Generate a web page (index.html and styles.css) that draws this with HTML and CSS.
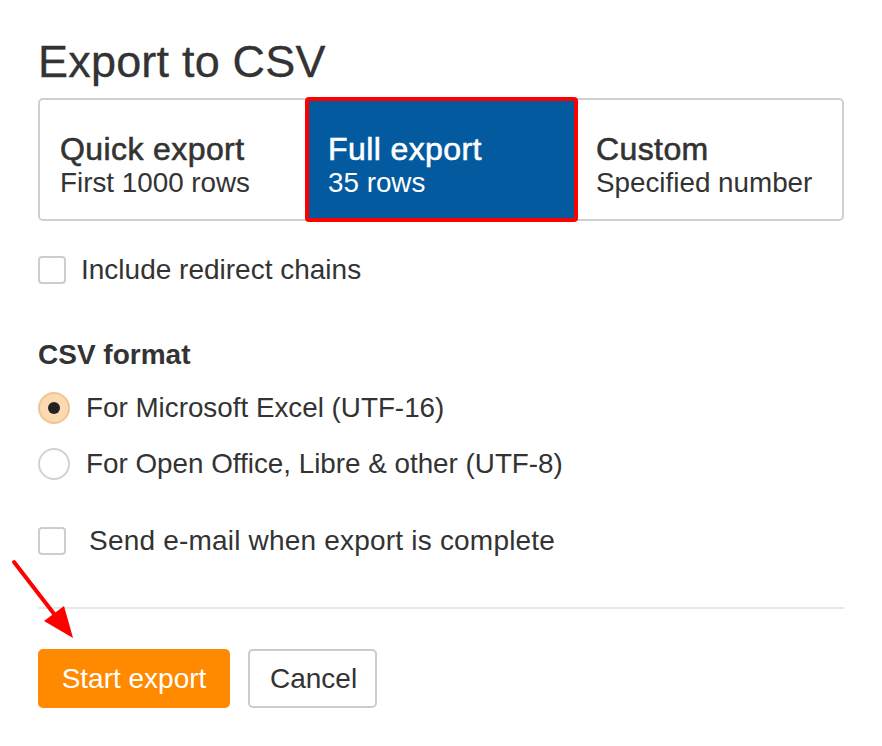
FILE: index.html
```html
<!DOCTYPE html>
<html lang="en">
<head>
<meta charset="utf-8">
<title>Export to CSV</title>
<link rel="stylesheet" href="styles.css">
</head>
<body>
<div class="dialog">
  <h1 class="title">Export to CSV</h1>

  <div class="segments">
    <div class="segment">
      <div class="seg-head">Quick export</div>
      <div class="seg-sub">First 1000 rows</div>
    </div>
    <div class="segment selected">
      <div class="seg-head">Full export</div>
      <div class="seg-sub">35 rows</div>
    </div>
    <div class="segment">
      <div class="seg-head">Custom</div>
      <div class="seg-sub">Specified number</div>
    </div>
  </div>

  <label class="check-row redirect">
    <span class="checkbox"></span>
    <span class="label-text">Include redirect chains</span>
  </label>

  <h2 class="section-title">CSV format</h2>

  <label class="radio-row first">
    <span class="radio checked"><span class="dot"></span></span>
    <span class="label-text">For Microsoft Excel (UTF-16)</span>
  </label>
  <label class="radio-row second">
    <span class="radio"></span>
    <span class="label-text">For Open Office, Libre &amp; other (UTF-8)</span>
  </label>

  <label class="check-row email">
    <span class="checkbox"></span>
    <span class="label-text wide">Send e-mail when export is complete</span>
  </label>

  <hr class="divider">

  <div class="actions">
    <button class="btn primary">Start export</button>
    <button class="btn secondary">Cancel</button>
  </div>

  <svg class="arrow" width="90" height="100" viewBox="0 0 90 100">
    <line x1="14" y1="12" x2="58" y2="69" stroke="#f00" stroke-width="4" stroke-linecap="round"/>
    <polygon points="73,88 44,71 64,56" fill="#f00"/>
  </svg>
</div>
</body>
</html>
```

FILE: styles.css
```css
html, body {
  margin: 0;
  padding: 0;
  background: #fff;
}

body {
  font-family: "Liberation Sans", Arial, Helvetica, sans-serif;
  color: #333;
}

.dialog {
  position: relative;
  width: 806px;
  padding: 37px 38px 0 38px;
}

.title {
  margin: 0;
  font-size: 45px;
  line-height: 50px;
  font-weight: normal;
  color: #333;
  letter-spacing: 0.2px;
  -webkit-text-stroke: 0.3px #333;
}

.segments {
  margin-top: 11px;
  display: grid;
  grid-template-columns: 265px 273px 1fr;
  border: 2px solid #cfcfcf;
  border-radius: 5px;
  height: 119px;
}

.segment {
  padding: 31px 16px 0 20px;
  background: #fff;
  border-radius: 4px;
}

.segment:last-child {
  padding-left: 18px;
}

.segment.selected {
  background: #035a9e;
  color: #fff;
  border: 4px solid #ff0000;
  margin: -3px 0 -3px 0;
  padding: 30px 10px 0 19px;
}

.seg-head {
  font-size: 32px;
  line-height: 36px;
  letter-spacing: 0.4px;
  -webkit-text-stroke: 0.6px currentColor;
  white-space: nowrap;
}

.seg-sub {
  font-size: 27.8px;
  line-height: 32px;
  white-space: nowrap;
}

.check-row,
.radio-row {
  display: flex;
  align-items: center;
  height: 32px;
  font-size: 28px;
}

.redirect {
  margin-top: 33px;
}

.checkbox {
  width: 24px;
  height: 24px;
  border: 2px solid #cdcdcd;
  border-radius: 4px;
  background: #fff;
  flex: none;
}

.check-row .label-text {
  margin-left: 15px;
}

.check-row .label-text.wide {
  margin-left: 23px;
  letter-spacing: 0.2px;
}

.section-title {
  margin: 53px 0 0 0;
  font-size: 28px;
  line-height: 32px;
  font-weight: bold;
  color: #333;
}

.radio-row.first {
  margin-top: 21px;
}

.radio-row.second {
  margin-top: 24px;
}

.radio {
  width: 28px;
  height: 28px;
  border: 2px solid #d2d2d2;
  border-radius: 50%;
  background: #fff;
  flex: none;
  display: flex;
  align-items: center;
  justify-content: center;
}

.radio.checked {
  background: #fcd9b1;
  border-color: #f0c596;
}

.radio .dot {
  width: 12px;
  height: 12px;
  border-radius: 50%;
  background: #222;
}

.radio-row .label-text {
  margin-left: 16px;
  font-size: 27.8px;
}

.email {
  margin-top: 45px;
}

.divider {
  margin: 50px 0 0 0;
  border: 0;
  height: 2px;
  background: #e8e8e8;
}

.actions {
  margin-top: 40px;
  display: flex;
  gap: 18px;
}

.btn {
  font-family: "Liberation Sans", Arial, Helvetica, sans-serif;
  font-size: 28px;
  height: 59px;
  border-radius: 5px;
  cursor: pointer;
  padding: 0 20px;
}

.primary {
  background: #ff8a00;
  color: #fff;
  border: 0;
  width: 192px;
}

.secondary {
  background: #fff;
  color: #333;
  border: 2px solid #cccccc;
  width: 129px;
}

.arrow {
  position: absolute;
  left: 0;
  top: 550px;
}
```
